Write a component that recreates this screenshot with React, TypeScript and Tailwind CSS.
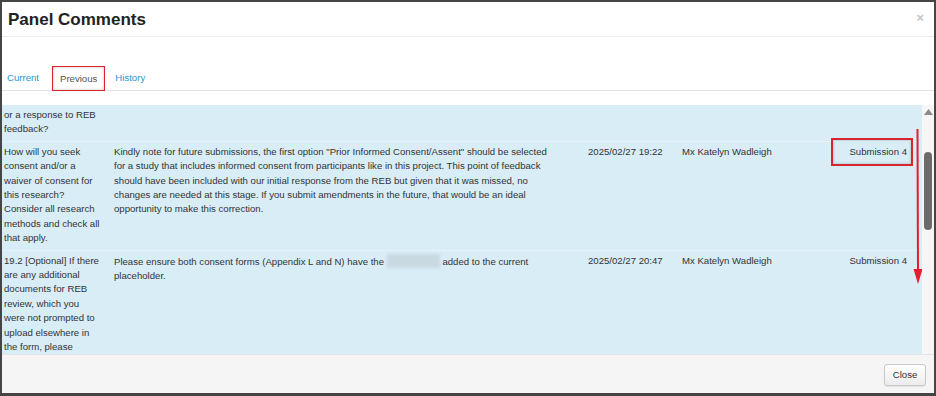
import React from 'react';

type Row = {
    question: string[];
    comment: React.ReactNode;
    date: string;
    author: string;
    submission: string;
    highlight?: boolean;
};

const rows: Row[] = [
    {
        question: ['or a response to REB', 'feedback?'],
        comment: null,
        date: '',
        author: '',
        submission: '',
    },
    {
        question: [
            'How will you seek',
            'consent and/or a',
            'waiver of consent for',
            'this research?',
            'Consider all research',
            'methods and check all',
            'that apply.',
        ],
        comment: (
            <>
                Kindly note for future submissions, the first option "Prior Informed Consent/Assent" should be selected for a study that
                includes informed consent from participants like in this project. This point of feedback should have been included with our
                initial response from the REB but given that it was missed, no changes are needed at this stage. If you submit amendments in
                the future, that would be an ideal opportunity to make this correction.
            </>
        ),
        date: '2025/02/27 19:22',
        author: 'Mx Katelyn Wadleigh',
        submission: 'Submission 4',
        highlight: true,
    },
    {
        question: [
            '19.2 [Optional] If there',
            'are any additional',
            'documents for REB',
            'review, which you',
            'were not prompted to',
            'upload elsewhere in',
            'the form, please',
        ],
        comment: (
            <>
                Please ensure both consent forms (Appendix L and N) have the{' '}
                <span className="inline-block w-[53px] h-[14px] align-[-3px] bg-[#c9d9e2] blur-[1.5px]"></span>
                {' '}added to the current placeholder.
            </>
        ),
        date: '2025/02/27 20:47',
        author: 'Mx Katelyn Wadleigh',
        submission: 'Submission 4',
    },
];

const App = () => {
    return (
        <div
            className="w-[936px] h-[396px] overflow-hidden bg-white border-[#454545] border-t-2 border-x-2 border-b-[3px] flex flex-col text-[#333] text-[9.6px] leading-[14.4px]"
            style={{ fontFamily: '"Liberation Sans", Arial, sans-serif' }}
        >
            {/* Header */}
            <div className="h-[35px] shrink-0 flex items-center justify-between pl-[6px] pr-[10px] border-b border-[#eeeeee]">
                <h4 className="text-[17px] leading-[20px] font-bold text-[#222] mt-[1px]">Panel Comments</h4>
                <span className="text-[13px] leading-none text-[#c4c4c4] font-bold mt-[-4px]">×</span>
            </div>

            {/* Tabs */}
            <div className="mt-[28px] h-[26px] shrink-0 flex items-end border-b border-[#e3e3e3]">
                <a className="px-[6px] py-[5px] text-[#2a96d2] mr-[7px] -ml-px">Current</a>
                <a className="px-[7px] pt-[5px] pb-[4px] mb-[-1px] text-[#555] border-[1.5px] border-[#d8262e] shadow-[inset_0_0_3px_rgba(0,0,0,0.25)] bg-white">Previous</a>
                <a className="px-[6px] py-[5px] text-[#2a96d2] ml-[4px]">History</a>
            </div>

            {/* Comments table */}
            <div className="mt-[14px] h-[249px] shrink-0 flex">
                <div className="relative w-[920px] bg-[#d9edf7] overflow-hidden">
                    {rows.map((r, i) => (
                        <div
                            key={i}
                            className={`grid grid-cols-[108px_475px_94px_1fr] ${i > 0 ? 'border-t border-[#e6f2f9]' : ''}`}
                        >
                            <div className="pl-[2px] pr-[2px] pt-[3px] pb-[4px]">
                                {r.question.map((line, j) => (
                                    <div key={j} className="whitespace-nowrap">{line}</div>
                                ))}
                            </div>
                            <div className="pl-[4px] pr-[26px] pt-[3px] pb-[4px]">{r.comment}</div>
                            <div className="pl-[3px] pt-[3px]">{r.date}</div>
                            <div className="flex items-start justify-between pl-[3px] pr-[15px] pt-[3px]">
                                <span>{r.author}</span>
                                {r.submission && (
                                    <span className="relative">
                                        {r.submission}
                                        {r.highlight && (
                                            <span className="absolute left-[-18px] right-[-6px] top-[-7px] h-[28px] border-2 border-[#d8262e] shadow-[inset_0_0_3px_rgba(0,0,0,0.25)]"></span>
                                        )}
                                    </span>
                                )}
                            </div>
                        </div>
                    ))}

                    {/* Red annotation arrow */}
                    <svg className="absolute left-[910px] top-[24px]" width="12" height="156" viewBox="0 0 12 156">
                        <line x1="5.5" y1="0" x2="6" y2="142" stroke="#e41e2c" strokeWidth="2" />
                        <polygon points="1.5,140 10.5,140 6,155" fill="#e41e2c" />
                    </svg>
                </div>

                {/* Scrollbar */}
                <div className="w-[12px] bg-[#f6f6f6] flex flex-col items-center">
                    <svg className="mt-[4px]" width="9" height="6" viewBox="0 0 9 6">
                        <polygon points="0,6 4.5,0 9,6" fill="#8a8a8a" />
                    </svg>
                    <div className="mt-[37px] w-[8px] h-[78px] rounded-[4px] bg-[#6b6b6b]"></div>
                </div>
            </div>

            {/* Footer */}
            <div className="flex-1 bg-[#f5f5f5] border-t border-[#e5e5e5] flex justify-end items-start pr-[8px] pt-[9px]">
                <button className="h-[22px] w-[42px] rounded-[3px] border border-[#c8c8c8] bg-gradient-to-b from-white to-[#ececec] text-[#333] text-[9.6px] shadow-[0_1px_1px_rgba(0,0,0,0.08)]">
                    Close
                </button>
            </div>
        </div>
    );
};

export default App;
